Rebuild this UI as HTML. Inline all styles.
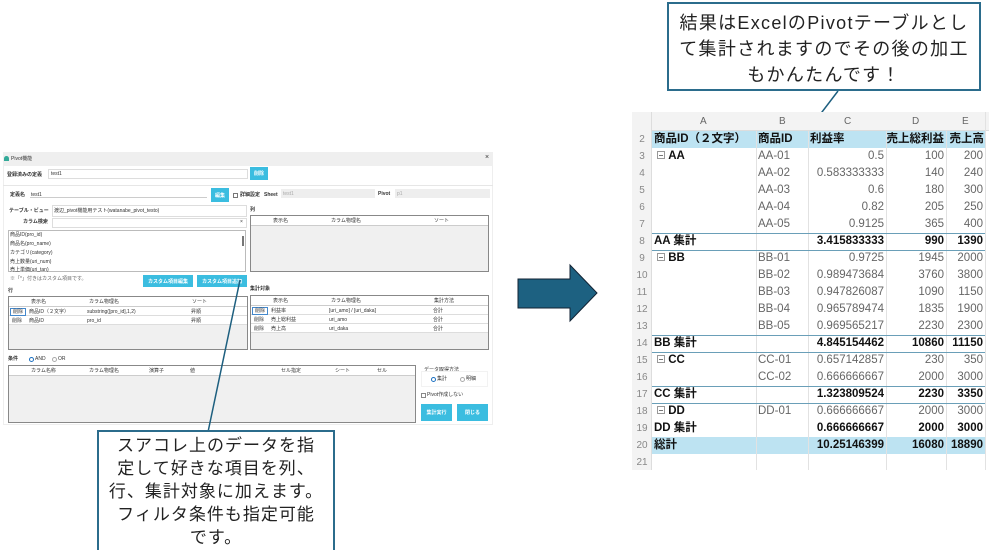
<!DOCTYPE html>
<html><head><meta charset="utf-8">
<style>
*{margin:0;padding:0;box-sizing:border-box}
body{width:1000px;height:550px;background:#fff;position:relative;overflow:hidden;font-family:"Liberation Sans","Noto Sans CJK JP",sans-serif}
.a{position:absolute}
.t{position:absolute;font-size:5px;color:#333;white-space:nowrap;line-height:6px}
.b{font-weight:bold}
.in{position:absolute;border:1px solid #ddd;background:#fff}
.btn{position:absolute;background:#3bbde0;color:#fff;font-size:5px;text-align:center;font-weight:bold;display:flex;align-items:center;justify-content:center}
.tbl{position:absolute;border:1px solid #888;background:#f0f0f0}
.hd{position:absolute;left:0;right:0;top:0;height:10px;background:#fff;border-bottom:1px solid #ccc}
.rw{position:absolute;left:0;right:0;height:9px;background:#fff;border-bottom:1px solid #ddd}
.xl{position:absolute;font-size:11.5px;color:#666;white-space:nowrap;line-height:17px}
.callout{position:absolute;border:2px solid #2b6c8c;background:#fff;font-family:"Liberation Sans","Noto Sans CJK JP",sans-serif;color:#222;text-align:center;letter-spacing:1px}
.bx{display:inline-block;width:8px;height:8px;border:1px solid #999;margin-right:3px;position:relative;top:0px}
.bx:after{content:"";position:absolute;left:1px;right:1px;top:3px;height:1px;background:#777}
</style></head><body>

<!-- Dialog -->
<div class="a" style="left:3px;top:152px;width:490px;height:273px;background:#fff;border:1px solid #eee"></div>
<div class="a" style="left:3px;top:152px;width:490px;height:14px;background:#efefef"></div>
<div class="a" style="left:4px;top:156px;width:5px;height:5px;background:#3a9;border-radius:3px 3px 0 0"></div>
<div class="t" style="left:11px;top:156px">Pivot機能</div>
<div class="t" style="left:485px;top:155px;font-size:7px">×</div>
<div class="t b" style="left:7px;top:172px">登録済みの定義</div>
<div class="in" style="left:48px;top:169px;width:200px;height:10px"></div>
<div class="t" style="left:51px;top:171px">test1</div>
<div class="btn" style="left:250px;top:167px;width:18px;height:13px">削除</div>
<div class="a" style="left:3px;top:185px;width:490px;height:1px;background:#e6e6e6"></div>
<div class="t b" style="left:10px;top:192px">定義名</div>
<div class="a" style="left:30px;top:197px;width:177px;height:1px;background:#ccc"></div>
<div class="t" style="left:31px;top:192px">test1</div>
<div class="btn" style="left:211px;top:188px;width:18px;height:14px">編集</div>
<div class="a" style="left:233px;top:193px;width:5px;height:5px;border:1px solid #777"></div>
<div class="t b" style="left:240px;top:192px">詳細設定</div>
<div class="t b" style="left:264px;top:192px">Sheet</div>
<div class="a" style="left:281px;top:189px;width:94px;height:9px;background:#eee"></div>
<div class="t" style="left:283px;top:191px;color:#aaa">test1</div>
<div class="t b" style="left:378px;top:191px">Pivot</div>
<div class="a" style="left:395px;top:189px;width:95px;height:9px;background:#eee"></div>
<div class="t" style="left:397px;top:191px;color:#aaa">p1</div>
<div class="t b" style="left:9px;top:208px">テーブル・ビュー</div>
<div class="in" style="left:52px;top:205px;width:195px;height:12px"></div>
<div class="t" style="left:54px;top:208px">渡辺_pivot機能用テスト(watanabe_pivot_testo)</div>
<div class="t b" style="left:23px;top:219px">カラム検索</div>
<div class="in" style="left:52px;top:218px;width:195px;height:10px"></div>
<div class="t" style="left:240px;top:219px">×</div>
<div class="in" style="left:8px;top:230px;width:238px;height:42px;border-color:#bbb"></div>
<div class="t" style="left:10px;top:232px">商品ID(pro_id)</div>
<div class="t" style="left:10px;top:241px">商品名(pro_name)</div>
<div class="t" style="left:10px;top:250px">カテゴリ(category)</div>
<div class="t" style="left:10px;top:259px">売上数量(uri_num)</div>
<div class="t" style="left:10px;top:267px">売上単価(uri_tan)</div>
<div class="a" style="left:242px;top:236px;width:2px;height:10px;background:#777"></div>
<div class="t" style="left:10px;top:276px;color:#666">※「*」付きはカスタム項目です。</div>
<div class="btn" style="left:143px;top:275px;width:50px;height:12px">カスタム項目編集</div>
<div class="btn" style="left:197px;top:275px;width:50px;height:12px">カスタム項目追加</div>
<div class="t b" style="left:8px;top:288px">行</div>
<div class="tbl" style="left:8px;top:296px;width:240px;height:54px">
 <div class="hd"><span class="t" style="left:22px;top:2px">表示名</span><span class="t" style="left:80px;top:2px">カラム物理名</span><span class="t" style="left:183px;top:2px">ソート</span></div>
 <div class="rw" style="top:10px"><span class="t" style="left:1px;top:1px;border:1px solid #48c;padding:0 2px">削除</span><span class="t" style="left:20px;top:2px">商品ID（２文字）</span><span class="t" style="left:78px;top:2px">substring([pro_id],1,2)</span><span class="t" style="left:182px;top:2px">昇順</span></div>
 <div class="rw" style="top:19px"><span class="t" style="left:3px;top:2px">削除</span><span class="t" style="left:20px;top:2px">商品ID</span><span class="t" style="left:78px;top:2px">pro_id</span><span class="t" style="left:182px;top:2px">昇順</span></div>
</div>
<div class="t b" style="left:250px;top:207px">列</div>
<div class="tbl" style="left:250px;top:215px;width:239px;height:57px">
 <div class="hd"><span class="t" style="left:22px;top:2px">表示名</span><span class="t" style="left:80px;top:2px">カラム物理名</span><span class="t" style="left:183px;top:2px">ソート</span></div>
</div>
<div class="t b" style="left:250px;top:286px">集計対象</div>
<div class="tbl" style="left:250px;top:295px;width:239px;height:55px">
 <div class="hd"><span class="t" style="left:22px;top:2px">表示名</span><span class="t" style="left:80px;top:2px">カラム物理名</span><span class="t" style="left:183px;top:2px">集計方法</span></div>
 <div class="rw" style="top:10px"><span class="t" style="left:1px;top:1px;border:1px solid #48c;padding:0 2px">削除</span><span class="t" style="left:20px;top:2px">利益率</span><span class="t" style="left:78px;top:2px">[uri_amo] / [uri_daka]</span><span class="t" style="left:182px;top:2px">合計</span></div>
 <div class="rw" style="top:19px"><span class="t" style="left:3px;top:2px">削除</span><span class="t" style="left:20px;top:2px">売上総利益</span><span class="t" style="left:78px;top:2px">uri_amo</span><span class="t" style="left:182px;top:2px">合計</span></div>
 <div class="rw" style="top:28px"><span class="t" style="left:3px;top:2px">削除</span><span class="t" style="left:20px;top:2px">売上高</span><span class="t" style="left:78px;top:2px">uri_daka</span><span class="t" style="left:182px;top:2px">合計</span></div>
</div>
<div class="t b" style="left:8px;top:356px">条件</div>
<div class="a" style="left:29px;top:357px;width:5px;height:5px;border:1.5px solid #1a6fc0;border-radius:50%"></div>
<div class="t" style="left:35px;top:356px">AND</div>
<div class="a" style="left:52px;top:357px;width:5px;height:5px;border:1px solid #aaa;border-radius:50%"></div>
<div class="t" style="left:58px;top:356px">OR</div>
<div class="tbl" style="left:8px;top:365px;width:408px;height:58px">
 <div class="hd"><span class="t" style="left:22px;top:2px">カラム名称</span><span class="t" style="left:80px;top:2px">カラム物理名</span><span class="t" style="left:140px;top:2px">演算子</span><span class="t" style="left:181px;top:2px">値</span><span class="t" style="left:272px;top:2px">セル指定</span><span class="t" style="left:326px;top:2px">シート</span><span class="t" style="left:368px;top:2px">セル</span></div>
</div>
<div class="t" style="left:424px;top:367px">データ取得方法</div>
<div class="a" style="left:421px;top:371px;width:67px;height:16px;border:1px solid #f2f2f2"></div>
<div class="a" style="left:431px;top:377px;width:5px;height:5px;border:1.5px solid #1a6fc0;border-radius:50%"></div>
<div class="t" style="left:437px;top:376px">集計</div>
<div class="a" style="left:460px;top:377px;width:5px;height:5px;border:1px solid #aaa;border-radius:50%"></div>
<div class="t" style="left:466px;top:376px">明細</div>
<div class="a" style="left:421px;top:393px;width:5px;height:5px;border:1px solid #888"></div>
<div class="t" style="left:427px;top:392px">Pivot作成しない</div>
<div class="btn" style="left:421px;top:404px;width:31px;height:17px">集計実行</div>
<div class="btn" style="left:457px;top:404px;width:31px;height:17px">閉じる</div>

<!-- lines -->
<svg class="a" style="left:0;top:0" width="1000" height="550">
<line x1="240" y1="280" x2="208" y2="432" stroke="#1d5f7f" stroke-width="1.5"/>
<line x1="838" y1="91" x2="790" y2="154" stroke="#1d5f7f" stroke-width="1.5"/>
<polygon points="518,279 570,279 570,265 597,293 570,321 570,308 518,308" fill="#1d6181" stroke="#123" stroke-width="1"/>
</svg>

<!-- Bottom callout -->
<div class="callout" style="left:97px;top:430px;width:238px;height:120px;font-size:17px;line-height:23px;padding-top:2px;border-bottom:none">スアコレ上のデータを指<br>定して好きな項目を列、<br>行、集計対象に加えます。<br>フィルタ条件も指定可能<br>です。</div>

<!-- Top callout -->
<div class="callout" style="left:667px;top:2px;width:314px;height:89px;font-size:18px;line-height:26px;padding-top:6px;letter-spacing:1.3px">結果はExcelのPivotテーブルとし<br>て集計されますのでその後の加工<br>もかんたんです！</div>

<!-- Excel -->
<div class="a" style="left:632px;top:112px;width:357px;height:358px;background:#fff"></div>
<div class="a" style="left:632px;top:112px;width:357px;height:19px;background:#f3f3f3;border-bottom:1px solid #ddd"></div>
<div class="a" style="left:632px;top:112px;width:20px;height:358px;background:#f3f3f3;border-right:1px solid #ddd"></div>
<div class="xl" style="left:700px;top:113px;font-size:10px">A</div>
<div class="xl" style="left:779px;top:113px;font-size:10px">B</div>
<div class="xl" style="left:844px;top:113px;font-size:10px">C</div>
<div class="xl" style="left:912px;top:113px;font-size:10px">D</div>
<div class="xl" style="left:962px;top:113px;font-size:10px">E</div>
<div class="a" style="left:652px;top:131px;width:333px;height:17px;background:#bde3f2"></div>
<div class="a" style="left:652px;top:437px;width:333px;height:17px;background:#bde3f2"></div>
<svg class="a" style="left:0;top:0" width="1000" height="550">
<g stroke="#e2e2e2" stroke-width="1">
<line x1="756.5" y1="131" x2="756.5" y2="470"/><line x1="808.5" y1="131" x2="808.5" y2="470"/><line x1="886.5" y1="131" x2="886.5" y2="470"/><line x1="946.5" y1="131" x2="946.5" y2="470"/><line x1="985.5" y1="112" x2="985.5" y2="470"/>
</g>
<g stroke="#6a9fb8" stroke-width="1">
<line x1="652" y1="233.5" x2="985" y2="233.5"/><line x1="652" y1="250.5" x2="985" y2="250.5"/>
<line x1="652" y1="335.5" x2="985" y2="335.5"/><line x1="652" y1="352.5" x2="985" y2="352.5"/>
<line x1="652" y1="386.5" x2="985" y2="386.5"/><line x1="652" y1="403.5" x2="985" y2="403.5"/>
</g>
</svg>
<div id="xl"></div>
<script>
var rows=[
["2","商品ID（２文字）","商品ID","利益率","売上総利益","売上高",1],
["3","AA","AA-01","0.5","100","200",2],
["4","","AA-02","0.583333333","140","240"],
["5","","AA-03","0.6","180","300"],
["6","","AA-04","0.82","205","250"],
["7","","AA-05","0.9125","365","400"],
["8","AA 集計","","3.415833333","990","1390",3],
["9","BB","BB-01","0.9725","1945","2000",2],
["10","","BB-02","0.989473684","3760","3800"],
["11","","BB-03","0.947826087","1090","1150"],
["12","","BB-04","0.965789474","1835","1900"],
["13","","BB-05","0.969565217","2230","2300"],
["14","BB 集計","","4.845154462","10860","11150",3],
["15","CC","CC-01","0.657142857","230","350",2],
["16","","CC-02","0.666666667","2000","3000"],
["17","CC 集計","","1.323809524","2230","3350",3],
["18","DD","DD-01","0.666666667","2000","3000",2],
["19","DD 集計","","0.666666667","2000","3000",3],
["20","総計","","10.25146399","16080","18890",3],
["21","","","","",""]];
var h="";
rows.forEach(function(r,i){var y=131+i*17;var k=r[6]||0;
var st=function(x,w,al,txt,b){return '<div class="xl" style="left:'+x+'px;top:'+y+'px;width:'+w+'px;text-align:'+al+';'+(b?'font-weight:bold;color:#111;':'')+'">'+txt+'</div>';};
h+=st(632,20,'center','<span style="font-size:10px;color:#888">'+r[0]+'</span>');
if(k==1){h+=st(654,100,'left',r[1],1)+st(758,50,'left',r[2],1)+st(810,76,'left',r[3],1)+st(886,58,'right',r[4],1)+st(946,38,'right',r[5],1);}
else{var bb=(k==3);var a=r[1];if(k==2)a='&nbsp;<span class="bx"></span>'+a;h+=st(654,100,'left',a,k>=2)+st(758,50,'left',r[2])+st(810,74,'right',r[3],bb)+st(886,58,'right',r[4],bb)+st(946,37,'right',r[5],bb);}
});
document.getElementById('xl').innerHTML=h;
</script>
</body></html>
